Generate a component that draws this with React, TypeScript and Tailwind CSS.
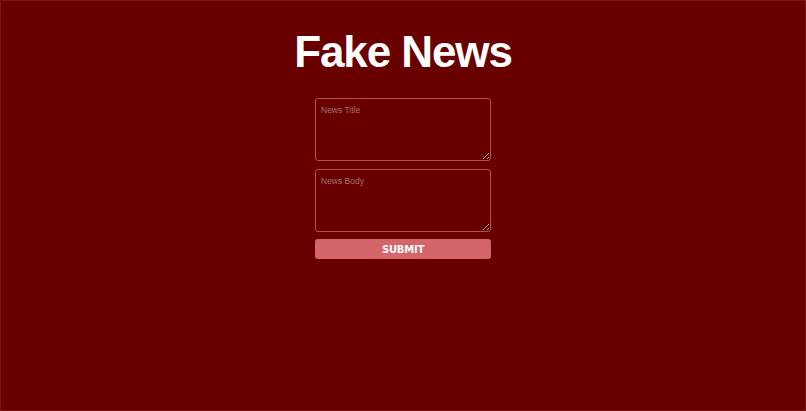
export default function App() {
  return (
    <div className="h-screen w-full overflow-hidden border border-[#761818] bg-[#680000] font-['Liberation_Sans',Arial,sans-serif]">
      <div className="flex flex-col items-center pt-[25px]">
        <h1 className="text-[44px] font-bold leading-[52px] tracking-tight text-white">Fake News</h1>

        <form className="mt-[20px] flex w-[176px] flex-col" onSubmit={(e) => e.preventDefault()}>
          <textarea
            placeholder="News Title"
            className="h-[63px] w-full rounded-[3px] border border-[#b84d55] bg-transparent px-[5px] py-[5px] text-[8.5px] text-white placeholder:text-[#a07070] outline-none"
          />
          <textarea
            placeholder="News Body"
            className="mt-[8px] h-[63px] w-full rounded-[3px] border border-[#b84d55] bg-transparent px-[5px] py-[5px] text-[8.5px] text-white placeholder:text-[#a07070] outline-none"
          />
          <button
            type="submit"
            className="mt-[7px] h-[20px] w-full rounded-[3px] bg-[#d4656a] font-['DejaVu_Sans',sans-serif] text-[10px] font-bold tracking-[-0.2px] text-white"
          >
            SUBMIT
          </button>
        </form>
      </div>
    </div>
  )
}
